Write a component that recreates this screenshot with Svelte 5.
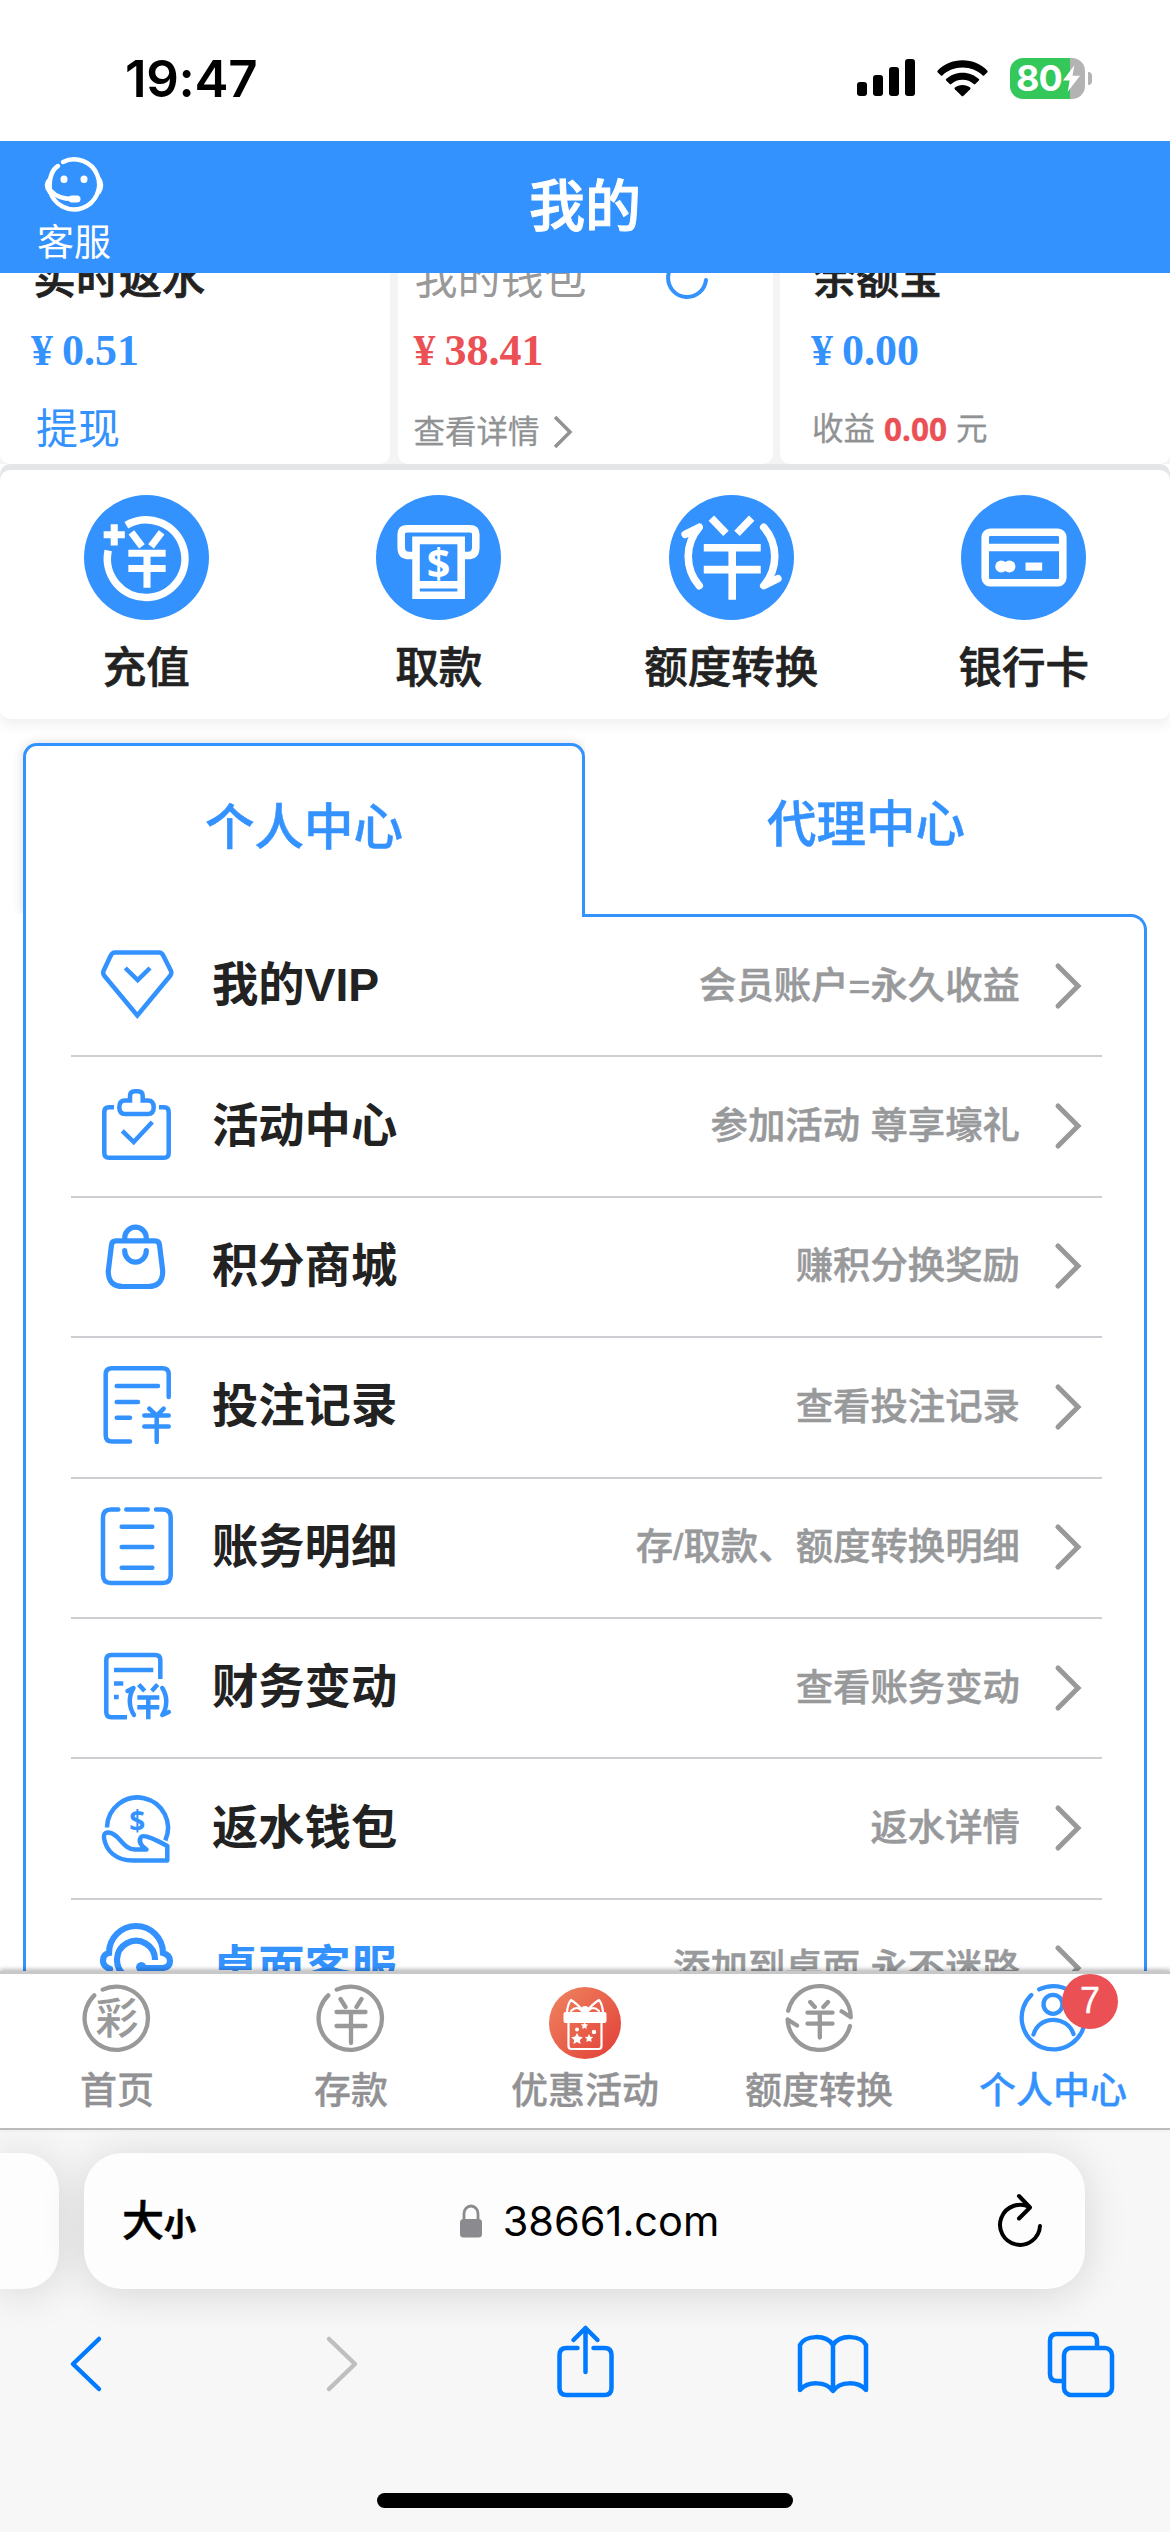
<script lang="ts">
  type MenuItem = {
    icon: string;
    title: string;
    note: string;
    active?: boolean;
  };

  const actions = [
    { icon: 'recharge', label: '充值' },
    { icon: 'withdraw', label: '取款' },
    { icon: 'transfer', label: '额度转换' },
    { icon: 'card', label: '银行卡' },
  ];

  const menu: MenuItem[] = [
    { icon: 'vip', title: '我的VIP', note: '会员账户=永久收益' },
    { icon: 'activity', title: '活动中心', note: '参加活动 尊享壕礼' },
    { icon: 'shop', title: '积分商城', note: '赚积分换奖励' },
    { icon: 'bets', title: '投注记录', note: '查看投注记录' },
    { icon: 'bills', title: '账务明细', note: '存/取款、额度转换明细' },
    { icon: 'changes', title: '财务变动', note: '查看账务变动' },
    { icon: 'rebate', title: '返水钱包', note: '返水详情' },
    { icon: 'desktop', title: '桌面客服', note: '添加到桌面 永不迷路', active: true },
  ];

  const tabs = [
    { icon: 'home', label: '首页' },
    { icon: 'deposit', label: '存款' },
    { icon: 'gift', label: '优惠活动' },
    { icon: 'convert', label: '额度转换' },
    { icon: 'user', label: '个人中心', active: true, badge: 7 },
  ];
</script>

<div class="screen">
  <div class="status">
    <span class="time">19:47</span>
    <div class="status-icons">
      <svg class="signal" viewBox="0 0 58 38">
        <rect x="0" y="23" width="10" height="14" rx="3" />
        <rect x="16" y="16" width="10" height="21" rx="3" />
        <rect x="32" y="8" width="10" height="29" rx="3" />
        <rect x="48" y="0" width="10" height="37" rx="3" />
      </svg>
      <svg class="wifi" viewBox="0 0 52 37">
        <path d="M26 0C36 0 45 4 51.400 10.500Q52 11.300 51.400 12L48 15.400Q47.300 16 46.500 15.400C41 10.300 34 7.400 26 7.400S11 10.300 5.500 15.400Q4.700 16 4 15.400L.6 12Q0 11.300 .6 10.500C7 4 16 0 26 0Z" />
        <path d="M26 12.600C32.600 12.600 38.300 15 42.700 19Q43.500 19.800 42.700 20.600L39 24.200Q38.300 24.900 37.500 24.200C34.300 21.400 30.500 19.900 26 19.900S17.700 21.400 14.500 24.200Q13.700 24.900 13 24.200L9.300 20.600Q8.500 19.800 9.300 19C13.700 15 19.400 12.600 26 12.600Z" />
        <path d="M26 25C29 25 31.700 26 33.800 27.800Q34.600 28.600 33.800 29.400L26.800 36.300Q26 37 25.200 36.300L18.200 29.400Q17.400 28.600 18.200 27.800C20.300 26 23 25 26 25Z" />
      </svg>
      <div class="battery">
        <span>80</span>
        <svg class="bolt" viewBox="0 0 20 30"><path d="M13 1 1 17h7L6 29 19 12h-8z" /></svg>
      </div>
    </div>
  </div>

  <header class="header">
    <div class="service">
      <svg viewBox="0 0 64 56" fill="none" stroke="#fff" stroke-width="4.500" stroke-linecap="round">
        <path d="M21 5A25 25 0 1 1 8 34M9 19Q11 12 16 9" />
        <path d="M9 19Q7 25 8 35M57 22Q61 28 57 35" />
        <path d="M8 35Q2 28 8 22" />
        <path d="M9 34Q16 42 31 42" />
        <path d="M30 42h5" stroke-width="7" />
        <path d="M22 22v.5M42 22v.5" stroke-width="7" />
      </svg>
      <span>客服</span>
    </div>
    <h1>我的</h1>
  </header>

  <main class="content">
    <section class="cards">
      <div class="card">
        <div class="card-title">实时返水</div>
        <div class="price">¥ 0.51</div>
        <div class="card-link">提现</div>
      </div>
      <div class="card">
        <div class="card-title soft">
          我的钱包
          <svg class="refresh" viewBox="0 0 44 44"><path d="M22 6A19 19 0 1 0 41 27" /></svg>
        </div>
        <div class="price red">¥ 38.41</div>
        <div class="card-more">
          查看详情
          <svg viewBox="0 0 20 34"><path d="M2 2l15 15L2 32" /></svg>
        </div>
      </div>
      <div class="card">
        <div class="card-title">余额宝</div>
        <div class="price">¥ 0.00</div>
        <div class="card-more earn">收益 <b>0.00</b> 元</div>
      </div>
    </section>

    <section class="actions">
      {#each actions as action}
        <div class="action">
          <svg viewBox="0 0 124 124" fill="none" stroke="#fff" stroke-width="7.500">
            <circle cx="62" cy="62" r="62" fill="#3492ff" stroke="none" />
            {#if action.icon === 'recharge'}
              <path d="M42 30A38.500 38.500 0 1 1 24 55" />
              <path d="M30 29v21M19.500 39.500h21" stroke-width="7" />
              <path d="M47 37l10.500 14M77 37L66.500 51M44 57.700h37M44 73h37M62.500 57v35" stroke-width="7" />
            {:else if action.icon === 'withdraw'}
              <path d="M38 60h-5q-8 0-8-8V39q0-5.500 6-5.500h62q6 0 6 5.500V52q0 8-8 8h-5" />
              <path d="M39.700 45h44.800v54.500H39.700zM40 89h44" />
              <text class="dollar" x="62" y="82" font-size="41">$</text>
            {:else if action.icon === 'transfer'}
              <path d="M42 23l14.500 15M82 23L67.500 38M34.500 52.400H91M34.500 74H91M62.700 52v52" />
              <path d="M16 39l14-7A44 44 0 0 0 30 90M94 32A44 44 0 0 1 94 90l14-7" stroke-linecap="round" stroke-linejoin="round" />
            {:else}
              <rect x="24" y="37" width="77" height="50" rx="5" />
              <path d="M24 52h77" />
              <path d="M64 71h16.500" stroke-width="8" />
              <g fill="#fff" stroke="none"><circle cx="40" cy="71" r="6" /><circle cx="48" cy="71" r="6" /></g>
            {/if}
          </svg>
          <span>{action.label}</span>
        </div>
      {/each}
    </section>

    <section class="center">
      <div class="center-tabs">
        <div class="center-tab current">个人中心</div>
        <div class="center-tab">代理中心</div>
      </div>

      <ul class="menu">
        {#each menu as item}
          <li class:active={item.active}>
            <svg class="menu-icon" viewBox="0 0 80 80">
              {#if item.icon === 'vip'}
                <path d="M17 6.600H61Q64 6.600 65.500 10L73 25Q74 27.500 72 30L39.300 69.500 6.500 30Q4.500 27.500 5.500 25L12.500 10Q14 6.600 17 6.600Z" />
                <path d="M27.300 22l12.400 12L52 22" />
              {:else if item.icon === 'activity'}
                <path d="M16 20.300H11q-4.700 0-4.700 4.700V66q0 4.800 4.700 4.800H66q4.700 0 4.700-4.800V25q0-4.700-4.700-4.700H61" />
                <path d="M32 13.600H27q-5.700 0-5.700 6.700T27 27H50q5.700 0 5.700-6.700T50 13.600H44.700V9q0-4.800-4.800-4.800H37q-5 0-5 4.800z" />
                <path d="M24.300 43.800l11.400 11.200L54.300 35" />
              {:else if item.icon === 'shop'}
                <g stroke-width="5.200" stroke-linecap="round">
                  <path d="M18 13.900H57Q61 13.900 61.500 18L64.700 44Q65 59.500 50 59.500H25Q10 59.500 10.300 44L13.500 18Q14 13.900 18 13.900Z" />
                  <path d="M26.700 13V11a10.800 10.800 0 0 1 21.600 0v2M26.700 23.700a10.800 11.500 0 0 0 21.600 0" />
                </g>
              {:else if item.icon === 'bets'}
                <g stroke-linecap="round">
                  <path d="M32 74.600H14q-6.300 0-6.300-6V7.300q0-6 6.300-6H64.500q6.200 0 6.200 6V30" />
                  <path d="M18.700 19.100H60M18.700 35H40M18.700 50.700H32" />
                  <path d="M51.300 41.600l7.400 7 7-7M46.300 48.600H70.700M46.300 59.500H70.700M58.700 49V75" />
                </g>
              {:else if item.icon === 'bills'}
                <g stroke-linecap="round">
                  <path d="M20.300 1.600H13Q5 1.600 5 9.600V67q0 8 8 8H64.700q8 0 8-8V9.600q0-8-8-8H58M28.300 1.600H49.700" />
                  <path d="M23.700 18.800H54.300M23.700 39.100H54.300M23.700 59.800H54.300" />
                </g>
              {:else if item.icon === 'changes'}
                <path d="M29 69.200H13.300q-5 0-5-5V11.900q0-5 5-5h44q5 0 5 5V31" />
                <path d="M16 22H55.300M16 35.400h9.300M16 48.900h4.700" />
                <path d="M40.700 36.500l6 6.500M59.700 36.500l-6 6.500M39.300 49.600h22M39.300 59.200h22M50.300 49.600v21.700" />
                <path d="M29.500 43l6-3A25 25 0 0 0 36 67M64.300 40A25 25 0 0 1 64.300 67l6.500-3" stroke-linecap="round" stroke-linejoin="round" />
              {:else if item.icon === 'rebate'}
                <path d="M9 38.500A30.500 30.500 0 1 1 67.300 51.500" />
                <path d="M6 49C5 42 12 42 18 47S28 60.500 37 60.500H48.500Q39 54 43 48Q46 44 69.300 57V71.500H35C18 71.500 8 62 6 49Z" stroke-linejoin="round" />
                <text class="dollar blue" x="39.300" y="41.500" font-size="28">$</text>
              {:else}
                <g stroke-width="6.200" stroke-linecap="round">
                  <path d="M12 40Q4.500 37 5 31T11 24A27 27 0 0 1 65 24Q72 26 72 32T65 39H44" />
                  <path d="M57 31A19 19 0 1 0 28 47" stroke-linecap="butt" />
                </g>
                <circle cx="43.300" cy="38.300" r="5.200" fill="#3492ff" stroke="none" />
              {/if}
            </svg>
            <span class="title">{item.title}</span>
            <span class="note">{item.note}</span>
            <svg class="arrow" viewBox="0 0 28 46"><path d="M3 3l20 20L3 43" /></svg>
          </li>
        {/each}
      </ul>
    </section>
  </main>

  <nav class="tabbar">
    {#each tabs as tab}
      <div class="tab" class:active={tab.active}>
        <div class="tab-icon">
          <svg viewBox="0 0 72 72">
            {#if tab.icon === 'home'}
              <path d="M21.700 7.600A31.700 31.700 0 1 1 13.300 13.400" />
              <text x="36" y="52" font-size="43">彩</text>
            {:else if tab.icon === 'deposit'}
              <path d="M21.700 7.600A31.700 31.700 0 1 1 13.300 13.400" />
              <path d="M25.500 17l5 8M46.500 17l-5 8M21.500 30h29M21.500 44h29M36 30v31" />
            {:else if tab.icon === 'gift'}
              <defs>
                <linearGradient id="gift" x1="0" y1="0" x2="1" y2="1">
                  <stop offset="0.1" stop-color="#ee7e5c" />
                  <stop offset="0.9" stop-color="#e3453b" />
                </linearGradient>
              </defs>
              <g transform="translate(0 5)">
                <circle cx="36" cy="36" r="36" fill="url(#gift)" stroke="none" />
                <g stroke="#fff" stroke-width="2.200" stroke-linejoin="round">
                  <path d="M35 25C31 20 27 16 22 13Q19 16 18 25M37 25C41 20 45 16 50 13Q53 16 54 25M22 24Q28 18 33 24M50 24Q44 18 39 24" />
                  <path d="M19.500 36V59q0 3 3 3h27q3 0 3-3V36" />
                </g>
                <g fill="#fff" stroke="none">
                  <rect x="14.500" y="25" width="43" height="11" rx="2" />
                  <circle cx="36" cy="23" r="4" />
                  <path d="M28 46l1.800 3.600 4 .6-2.900 2.800.7 4-3.600-1.900-3.600 1.900.7-4-2.900-2.800 4-.6zM40 47l1.300 2.700 3 .4-2.200 2 .5 3-2.600-1.400-2.600 1.400.5-3-2.200-2 3-.4zM35.500 35l1.100 2.300 2.600.3-1.900 1.800.5 2.600-2.300-1.200-2.300 1.200.5-2.600-1.900-1.800 2.600-.3z" />
                  <circle cx="28" cy="42.500" r="2" />
                  <circle cx="45" cy="45" r="2.200" />
                </g>
              </g>
            {:else if tab.icon === 'convert'}
              <path d="M5.200 28.700A31.700 31.700 0 0 1 67.800 35.300L58.600 29.300M67 44A31.700 31.700 0 0 1 4.600 37.500L14 43.500" stroke-linejoin="round" />
              <path d="M27.200 20l4.600 5M45 20l-4.600 5M24.500 30.700H49.500M24.500 41.700H49.500M36.800 30.700V55.500" />
            {:else}
              <path d="M22.200 7.400A31.700 31.700 0 1 1 14.300 13" />
              <circle cx="36" cy="22.300" r="9.500" />
              <path d="M16.500 52.500C22 33 50 33 56.500 52" />
            {/if}
          </svg>
          {#if tab.badge}
            <span class="badge">{tab.badge}</span>
          {/if}
        </div>
        <span>{tab.label}</span>
      </div>
    {/each}
  </nav>

  <footer class="browser">
    <div class="address-row">
      <div class="prev-page"></div>
      <div class="address">
        <span class="text-size">大<small>小</small></span>
        <div class="host">
          <svg viewBox="0 0 22 34">
            <rect x="0" y="15" width="22" height="18.500" rx="3.500" fill="#8a8a8f" />
            <path d="M4 16V9.500a7 7.500 0 0 1 14 0V16" fill="none" stroke="#8a8a8f" stroke-width="2.800" />
          </svg>
          <span>38661.com</span>
        </div>
        <svg class="reload" viewBox="0 0 46 56"><path d="M42 33A20 20 0 1 1 32 14.500M21 3l11 11.500-11 11" /></svg>
      </div>
    </div>

    <div class="toolbar">
      <svg viewBox="0 0 72 72"><path d="M49 11L23 36l26 25" /></svg>
      <svg class="off" viewBox="0 0 72 72"><path d="M30 11l26 25-26 25" /></svg>
      <svg viewBox="0 0 72 72">
        <path d="M30.500 20H19.500q-7 0-7 7V60q0 7 7 7H57.500q7 0 7-7V27q0-7-7-7H46.500M38.500 44V0M26.500 12l12-12 12 12" />
      </svg>
      <svg viewBox="0 0 72 72">
        <path d="M37 17C30 6 9 7 4 17V62C12 53 30 53 37 63ZM37 17C44 6 65 7 70 17V62C62 53 44 53 37 63Z" />
      </svg>
      <svg viewBox="0 0 72 72">
        <rect x="20" y="20" width="48" height="47" rx="7" />
        <path d="M19 53H13q-7 0-7-7V13q0-7 7-7H46q7 0 7 7v6" />
      </svg>
    </div>
    <div class="home-bar"></div>
  </footer>
</div>

<style>
  :global(body) {
    margin: 0;
    background: #fff;
  }

  .screen {
    display: flex;
    flex-direction: column;
    width: 1170px;
    height: 2532px;
    overflow: hidden;
    background: #fff;
    color: #222;
    font-family: Inter, 'Noto Sans CJK SC', sans-serif;
  }

  svg {
    display: block;
    overflow: visible;
  }

  /* status bar */
  .status {
    flex: none;
    display: flex;
    justify-content: space-between;
    align-items: center;
    box-sizing: border-box;
    height: 141px;
    padding: 15px 78px 0 125px;
    color: #000;
  }

  .time {
    font-size: 51px;
    font-weight: 600;
    letter-spacing: -0.3px;
  }

  .status-icons {
    display: flex;
    align-items: center;
    gap: 22px;
  }

  .signal {
    width: 58px;
    height: 38px;
  }

  .wifi {
    width: 51px;
    height: 37px;
  }

  .battery {
    position: relative;
    display: flex;
    align-items: center;
    width: 75px;
    height: 41px;
    margin-right: 7px;
    border-radius: 13px;
    background: linear-gradient(90deg, #34c759 60px, #b3b3b3 60px);
    color: #fff;
    font-size: 36px;
    font-weight: 700;
    letter-spacing: -1px;
  }

  .battery span {
    padding-left: 6px;
  }

  .bolt {
    width: 19px;
    height: 31px;
    fill: #fff;
  }

  .battery::after {
    content: '';
    position: absolute;
    left: 78px;
    top: 14px;
    width: 4px;
    height: 13px;
    border-radius: 0 5px 5px 0;
    background: #b3b3b3;
  }

  /* page header */
  .header {
    flex: none;
    display: grid;
    grid-template-columns: 148px 1fr 148px;
    height: 132px;
    background: #3492ff;
    color: #fff;
    z-index: 1;
  }

  .service {
    display: flex;
    flex-direction: column;
    align-items: center;
    padding-top: 16px;
    font-size: 37px;
    line-height: 44px;
  }

  .service svg {
    width: 64px;
    height: 56px;
    margin-bottom: 8px;
  }

  h1 {
    margin: 0;
    text-align: center;
    font-size: 56px;
    font-weight: 500;
    line-height: 130px;
    -webkit-text-stroke: 1px;
  }

  .content {
    flex: none;
    height: 1698px;
    overflow: hidden;
  }

  /* wallet cards */
  .cards {
    display: grid;
    grid-template-columns: 390px 375px 390px;
    gap: 7.500px;
    margin-top: -20px;
    background: #f4f4f5;
  }

  .card {
    box-sizing: border-box;
    height: 211px;
    padding-left: 31px;
    border-radius: 0 0 10px 10px;
    background: #fff;
  }

  .card:nth-child(2) {
    padding-left: 16px;
  }

  .card-title {
    display: flex;
    align-items: center;
    gap: 78px;
    height: 44px;
    padding-left: 2px;
    font-size: 43px;
    font-weight: 500;
    -webkit-text-stroke: 0.7px;
  }

  .card-title.soft {
    padding-left: 1px;
    color: #999;
    font-weight: 400;
    -webkit-text-stroke: 0;
  }

  .refresh {
    width: 44px;
    height: 44px;
    fill: none;
    stroke: #3492ff;
    stroke-width: 4;
    stroke-linecap: round;
  }

  .price {
    margin-top: 30px;
    color: #3492ff;
    font-family: 'Liberation Serif', serif;
    font-size: 44px;
    font-weight: 700;
    line-height: 48px;
    word-spacing: -2px;
  }

  .price.red {
    color: #eb5055;
  }

  .card-link {
    margin: 28px 0 0 5px;
    color: #3492ff;
    font-size: 42px;
    line-height: 52px;
  }

  .card-more {
    display: flex;
    align-items: center;
    gap: 13px;
    margin-top: 31px;
    color: #909294;
    font-size: 31.500px;
    line-height: 52px;
    -webkit-text-stroke: 0.3px;
  }

  .card-more.earn {
    gap: 9px;
    margin-top: 28px;
    padding-left: 1px;
  }

  .card-more svg {
    width: 20px;
    height: 34px;
    fill: none;
    stroke: #909294;
    stroke-width: 3.500;
  }

  .card-more b {
    color: #eb5055;
    font-family: 'Noto Sans', sans-serif;
  }

  /* quick actions */
  .actions {
    display: grid;
    grid-template-columns: repeat(4, 1fr);
    box-sizing: border-box;
    height: 249px;
    margin-top: 6px;
    padding-top: 25px;
    border-radius: 10px;
    background: #fff;
    box-shadow: 0 -6px 0 #e4e6e7, 0 6px 12px rgba(60, 66, 70, 0.08);
    clip-path: inset(-6px 0 -20px 0);
  }

  .action {
    display: flex;
    flex-direction: column;
    align-items: center;
    gap: 20px;
    font-size: 43.500px;
    font-weight: 500;
    line-height: 54px;
    -webkit-text-stroke: 0.7px;
  }

  .action svg {
    width: 125px;
    height: 125px;
  }

  .dollar {
    fill: #fff;
    stroke: none;
    text-anchor: middle;
    font-family: 'Noto Sans', sans-serif;
    font-weight: 700;
  }

  .dollar.blue {
    fill: #3492ff;
  }

  /* personal / agent centre */
  .center {
    margin: 24px 23px 0;
  }

  .center-tabs {
    display: grid;
    grid-template-columns: 562px 562px;
    height: 171px;
  }

  .center-tab {
    color: #3492ff;
    font-size: 49.500px;
    font-weight: 500;
    line-height: 163px;
    text-align: center;
    -webkit-text-stroke: 0.5px;
  }

  .center-tab.current {
    box-sizing: border-box;
    border: 3px solid #3492ff;
    border-bottom: 0;
    border-radius: 14px 14px 0 0;
    background: #fff;
    box-shadow: 0 0 12px rgba(0, 0, 0, 0.14);
    clip-path: inset(-14px 0 0 -14px);
  }

  .menu {
    display: flex;
    flex-direction: column;
    margin: 0;
    padding: 0 42px 0 45px;
    border: solid #3492ff;
    border-width: 3px 3px 0;
    border-radius: 0 16px 0 0;
    list-style: none;
    position: relative;
  }

  /* opens the top edge of the list under the current tab */
  .menu::before {
    content: '';
    position: absolute;
    left: 0;
    top: -4px;
    width: 556px;
    height: 5px;
    background: #fff;
  }

  .menu li {
    display: flex;
    align-items: center;
    box-sizing: border-box;
    height: 140.400px;
    padding: 0 19px 0 27px;
    border-bottom: 2px solid #cdced1;
  }

  .menu-icon {
    flex: none;
    width: 80px;
    height: 80px;
    fill: none;
    stroke: #3492ff;
    stroke-width: 4.500;
  }

  .title {
    flex: 1;
    padding: 0 0 2px 34px;
    font-family: 'Liberation Sans', 'Noto Sans CJK SC', sans-serif;
    font-size: 46.300px;
    font-weight: 600;
    line-height: 60px;
  }

  .active .title {
    color: #3492ff;
  }

  .note {
    padding-bottom: 1px;
    color: #98999b;
    font-family: 'Liberation Sans', 'Noto Sans CJK SC', sans-serif;
    font-size: 37.400px;
    font-weight: 500;
    line-height: 50px;
    white-space: nowrap;
    -webkit-text-stroke: 0.5px;
  }

  .arrow {
    width: 28px;
    height: 46px;
    margin: 0 0 1px 35px;
    fill: none;
    stroke: #98999b;
    stroke-width: 5;
    stroke-linecap: round;
  }

  /* site tab bar */
  .tabbar {
    flex: none;
    display: grid;
    grid-template-columns: repeat(5, 1fr);
    box-sizing: border-box;
    height: 159px;
    padding-top: 8px;
    border-top: 3px solid #c8c8c8;
    border-bottom: 2px solid #bcbcbc;
    background: #fff;
    box-shadow: 0 -2px 4px rgba(0, 0, 0, 0.25);
    z-index: 1;
  }

  .tab {
    display: flex;
    flex-direction: column;
    align-items: center;
    gap: 13px;
    color: #929295;
    font-size: 37px;
    font-weight: 500;
    line-height: 48px;
    -webkit-text-stroke: 0.3px;
  }

  .tab.active {
    color: #3492ff;
  }

  .tab-icon {
    position: relative;
  }

  .tab-icon svg {
    width: 72px;
    height: 72px;
    fill: none;
    stroke: #999;
    stroke-width: 4.300;
    stroke-linecap: round;
  }

  .tab-icon text {
    fill: #999;
    stroke: none;
    text-anchor: middle;
    font-weight: 500;
  }

  .tab.active svg {
    stroke: #3492ff;
  }

  .badge {
    position: absolute;
    left: 45px;
    top: -8px;
    width: 56px;
    height: 55px;
    border-radius: 50%;
    background: #eb5055;
    color: #fff;
    font-family: 'Liberation Sans', sans-serif;
    font-size: 36px;
    font-weight: 400;
    line-height: 54px;
    text-align: center;
  }

  /* browser chrome */
  .browser {
    flex: 1;
    display: flex;
    flex-direction: column;
    background: #f7f7f7;
  }

  .address-row {
    display: flex;
    gap: 25px;
    padding-top: 23px;
    overflow: hidden;
    height: 175px;
  }

  .prev-page,
  .address {
    height: 136px;
    background: #fdfdfd;
    box-shadow: 0 4px 44px rgba(0, 0, 0, 0.14);
  }

  .prev-page {
    width: 59px;
    border-radius: 0 36px 36px 0;
  }

  .address {
    display: grid;
    grid-template-columns: 120px 1fr 120px;
    align-items: center;
    width: 1001px;
    border-radius: 38px;
    color: #000;
  }

  .text-size {
    display: flex;
    align-items: baseline;
    padding: 3px 0 0 38px;
    font-size: 42px;
    font-weight: 500;
    line-height: 50px;
    -webkit-text-stroke: 0.6px;
  }

  .text-size small {
    font-size: 32px;
    font-weight: 700;
  }

  .host {
    display: flex;
    align-items: center;
    justify-content: center;
    gap: 21px;
    padding-left: 10px;
    font-size: 41.500px;
  }

  .host svg {
    width: 22px;
    height: 34px;
  }

  .reload {
    width: 46px;
    height: 56px;
    margin-left: 33px;
    fill: none;
    stroke: #000;
    stroke-width: 4;
    stroke-linecap: round;
    stroke-linejoin: round;
  }

  .toolbar {
    display: flex;
    justify-content: space-between;
    padding: 0 54px 0 50px;
  }

  .toolbar svg {
    width: 72px;
    height: 72px;
    fill: none;
    stroke: #007aff;
    stroke-width: 4.500;
    stroke-linecap: round;
    stroke-linejoin: round;
  }

  .toolbar .off {
    stroke: #bfbfbf;
  }

  .home-bar {
    width: 416px;
    height: 15px;
    margin: auto auto 24px;
    border-radius: 8px;
    background: #000;
  }
</style>
